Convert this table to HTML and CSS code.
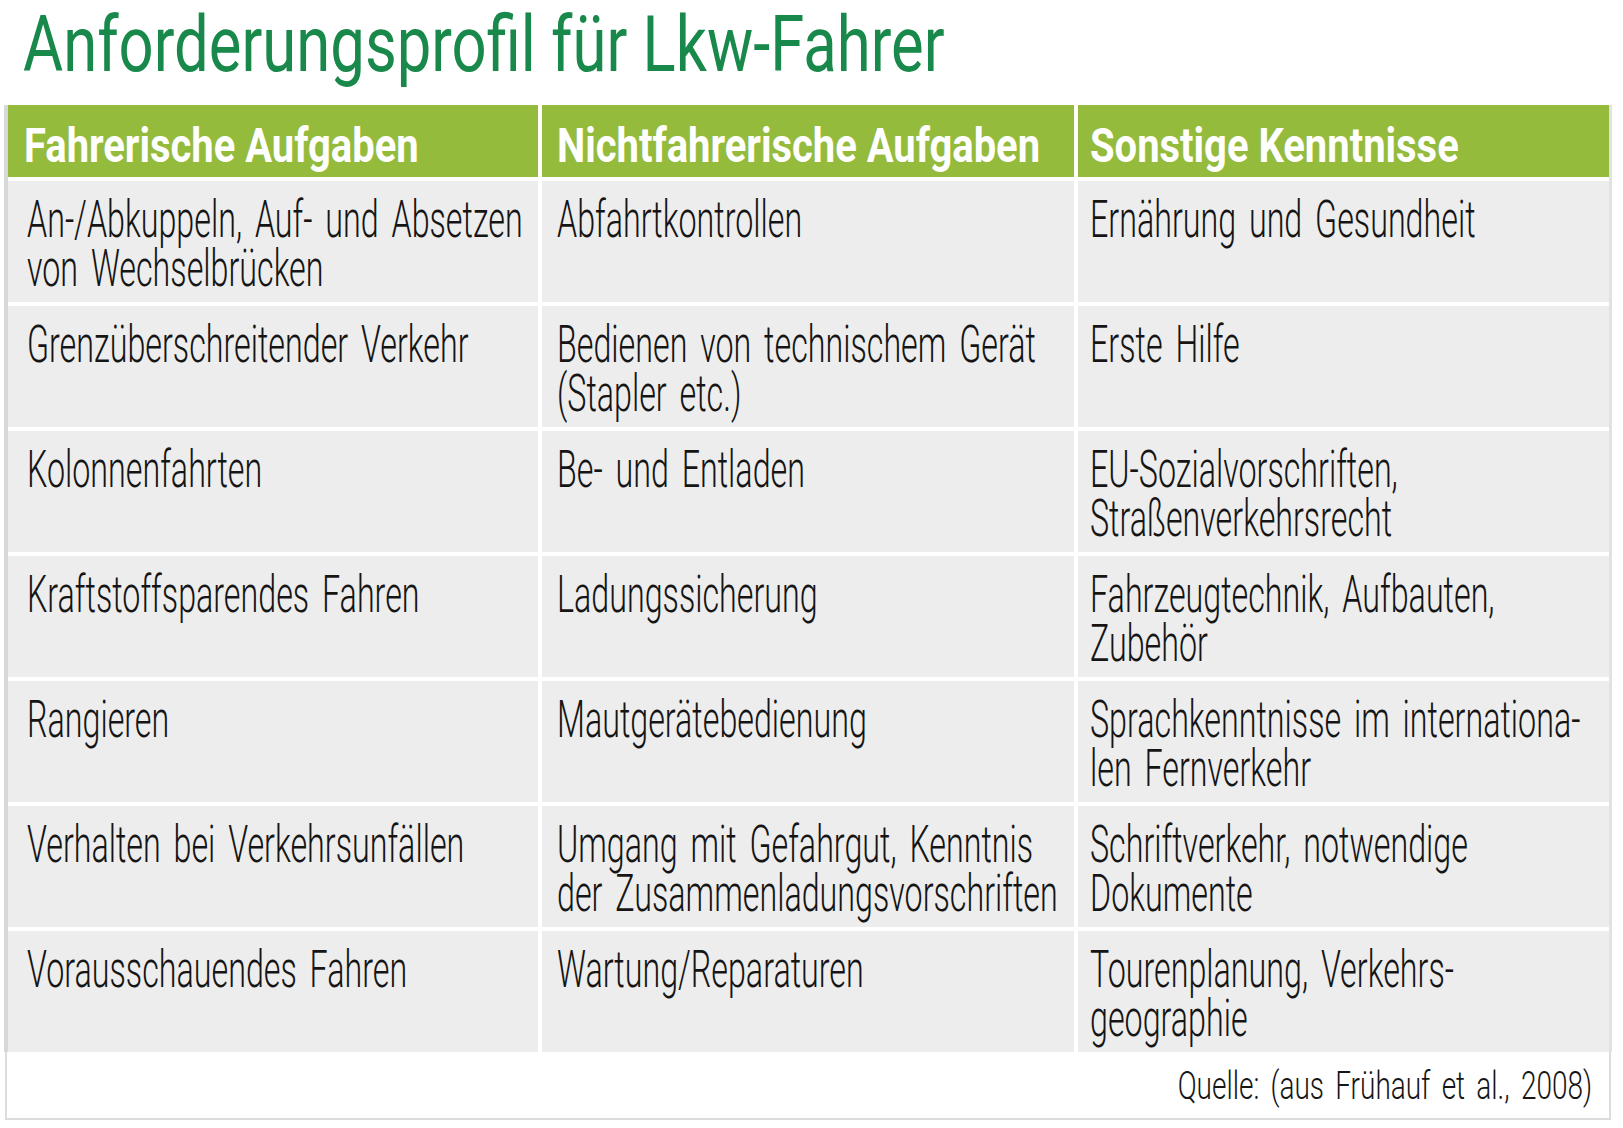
FILE: index.html
```html
<!DOCTYPE html>
<html lang="de">
<head>
<meta charset="utf-8">
<title>Anforderungsprofil für Lkw-Fahrer</title>
<link rel="stylesheet" href="styles.css">
</head>
<body>
<h1 class="title"><span class="sx sx-title">Anforderungsprofil für Lkw-Fahrer</span></h1>
<div class="table">
  <div class="grid">
    <div class="th c1"><span class="sx sx-head">Fahrerische Aufgaben</span></div>
    <div class="th c2"><span class="sx sx-head">Nichtfahrerische Aufgaben</span></div>
    <div class="th c3"><span class="sx sx-head">Sonstige Kenntnisse</span></div>

    <div class="td c1"><span class="sx">An-/Abkuppeln, Auf- und Absetzen<br>von Wechselbrücken</span></div>
    <div class="td c2"><span class="sx">Abfahrtkontrollen</span></div>
    <div class="td c3"><span class="sx">Ernährung und Gesundheit</span></div>

    <div class="td c1"><span class="sx">Grenzüberschreitender Verkehr</span></div>
    <div class="td c2"><span class="sx">Bedienen von technischem Gerät<br>(Stapler etc.)</span></div>
    <div class="td c3"><span class="sx">Erste Hilfe</span></div>

    <div class="td c1"><span class="sx">Kolonnenfahrten</span></div>
    <div class="td c2"><span class="sx">Be- und Entladen</span></div>
    <div class="td c3"><span class="sx">EU-Sozialvorschriften,<br>Straßenverkehrsrecht</span></div>

    <div class="td c1"><span class="sx">Kraftstoffsparendes Fahren</span></div>
    <div class="td c2"><span class="sx">Ladungssicherung</span></div>
    <div class="td c3"><span class="sx">Fahrzeugtechnik, Aufbauten,<br>Zubehör</span></div>

    <div class="td c1"><span class="sx">Rangieren</span></div>
    <div class="td c2"><span class="sx">Mautgerätebedienung</span></div>
    <div class="td c3"><span class="sx">Sprachkenntnisse im internationa-<br>len Fernverkehr</span></div>

    <div class="td c1"><span class="sx">Verhalten bei Verkehrsunfällen</span></div>
    <div class="td c2"><span class="sx">Umgang mit Gefahrgut, Kenntnis<br>der Zusammenladungsvorschriften</span></div>
    <div class="td c3"><span class="sx">Schriftverkehr, notwendige<br>Dokumente</span></div>

    <div class="td c1"><span class="sx">Vorausschauendes Fahren</span></div>
    <div class="td c2"><span class="sx">Wartung/Reparaturen</span></div>
    <div class="td c3"><span class="sx">Tourenplanung, Verkehrs-<br>geographie</span></div>
  </div>
</div>
<div class="source"><span class="sx sx-source">Quelle: (aus Frühauf et al., 2008)</span></div>
</body>
</html>
```

FILE: styles.css
```css
html, body {
  margin: 0;
  padding: 0;
  background: #ffffff;
}

body {
  width: 1623px;
  overflow: hidden;
  font-family: Roboto, "Liberation Sans", sans-serif;
  color: #151515;
}

.sx {
  display: inline-block;
  white-space: nowrap;
  transform-origin: 0 0;
  transform: scaleX(0.62);
}

.title {
  margin: 0;
  height: 105px;
  box-sizing: border-box;
  padding: 7px 0 0 23px;
  overflow: hidden;
  font-size: 77px;
  line-height: 77px;
  font-weight: 400;
  color: #18894a;
}

.sx-title {
  transform: scaleX(0.8);
}

.table {
  margin-left: 4px;
  width: 1608px;
  box-sizing: border-box;
  border-left: 4px solid #d8d8d8;
  border-right: 3px solid #e2e2e2;
}

.grid {
  display: grid;
  grid-template-columns: 530px 532px 531px;
  grid-template-rows: 72px repeat(7, 121px);
  gap: 4px;
  background: #ffffff;
}

.th {
  background: #95bb3d;
  color: #ffffff;
  font-size: 49px;
  font-weight: 700;
  line-height: 60px;
  padding-top: 11px;
  box-sizing: border-box;
  overflow: hidden;
}

.sx-head {
  transform: scaleX(0.815);
}

.td {
  background: #ededed;
  font-size: 52px;
  font-weight: 300;
  line-height: 49px;
  word-spacing: 8px;
  padding-top: 14px;
  box-sizing: border-box;
  overflow: hidden;
}

.c1 { padding-left: 19px; }
.th.c1 { padding-left: 16px; }
.c2 { padding-left: 15px; }
.c3 { padding-left: 12px; }

.source {
  margin-left: 5px;
  width: 1606px;
  height: 68px;
  box-sizing: border-box;
  border: 2px solid #dcdcdc;
  border-top: none;
  overflow: hidden;
  text-align: right;
  padding: 12px 17px 0 0;
  font-size: 38px;
  font-weight: 300;
  line-height: 44px;
  word-spacing: 6px;
}

.sx-source {
  transform-origin: 100% 0;
  transform: scaleX(0.736);
}
```
